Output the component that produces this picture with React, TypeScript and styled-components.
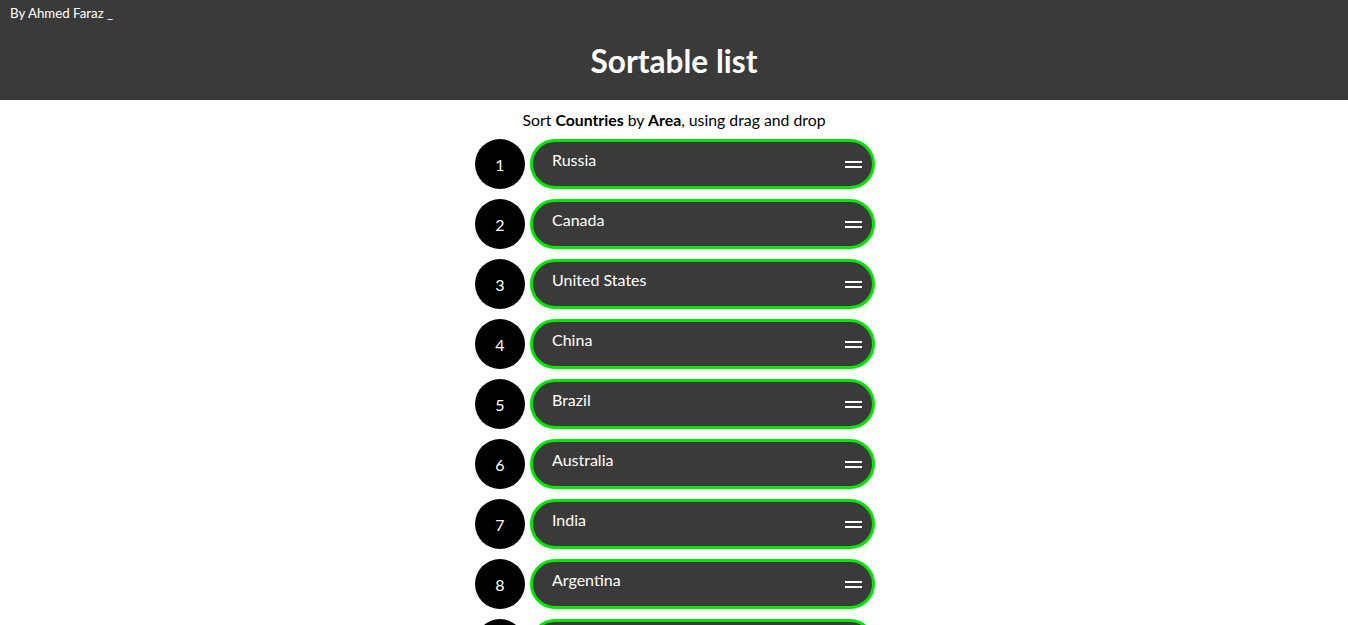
import React from "react";
import styled, { createGlobalStyle } from "styled-components";

const GlobalStyle = createGlobalStyle`
  body {
    margin: 0;
    font-family: Lato, "Open Sans", sans-serif;
    background: #ffffff;
    color: #000000;
  }
`;

const Header = styled.header`
  background: #3a3a3a;
  color: #ffffff;
  height: 100px;
  box-sizing: border-box;
  padding: 5px 10px 0;
`;

const Byline = styled.div`
  font-size: 13.3px;
  line-height: 16px;
`;

const Title = styled.h1`
  margin: 20px 0 0;
  text-align: center;
  font-size: 31.6px;
  font-weight: 700;
  line-height: 40px;
`;

const Subtitle = styled.p`
  margin: 10px 0 9px;
  text-align: center;
  font-size: 15.8px;
  line-height: 20px;
  b {
    font-weight: 700;
  }
`;

const List = styled.ul`
  list-style: none;
  margin: 0 auto;
  padding: 0 0 0 2px;
  box-sizing: border-box;
  width: 402px;
  display: flex;
  flex-direction: column;
  gap: 10px;
`;

const Row = styled.li`
  display: flex;
  align-items: center;
  gap: 5px;
`;

const Number = styled.span`
  flex: 0 0 50px;
  width: 50px;
  height: 50px;
  border-radius: 50%;
  background: #000000;
  color: #ffffff;
  display: flex;
  align-items: center;
  justify-content: center;
  font-size: 16px;
`;

const Item = styled.div`
  flex: 1;
  height: 50px;
  box-sizing: border-box;
  border: 3px solid #00e600;
  border-radius: 25px;
  background: #3a3a3a;
  color: #ffffff;
  display: flex;
  align-items: center;
  justify-content: space-between;
  padding: 0 10px 0 19px;
`;

const Name = styled.p`
  margin: 0 0 10px;
  font-size: 16px;
`;

const Grip = styled.span`
  width: 17px;
  height: 7px;
  display: flex;
  flex-direction: column;
  justify-content: space-between;
  &::before,
  &::after {
    content: "";
    height: 2px;
    background: #ffffff;
  }
`;

const countries = [
  "Russia",
  "Canada",
  "United States",
  "China",
  "Brazil",
  "Australia",
  "India",
  "Argentina",
  "Kazakhstan",
  "Algeria",
];

export default function App() {
  return (
    <>
      <GlobalStyle />
      <Header>
        <Byline>By Ahmed Faraz _</Byline>
        <Title>Sortable list</Title>
      </Header>
      <Subtitle>
        Sort <b>Countries</b> by <b>Area</b>, using drag and drop
      </Subtitle>
      <List>
        {countries.map((c, i) => (
          <Row key={c}>
            <Number>{i + 1}</Number>
            <Item draggable>
              <Name>{c}</Name>
              <Grip />
            </Item>
          </Row>
        ))}
      </List>
    </>
  );
}
